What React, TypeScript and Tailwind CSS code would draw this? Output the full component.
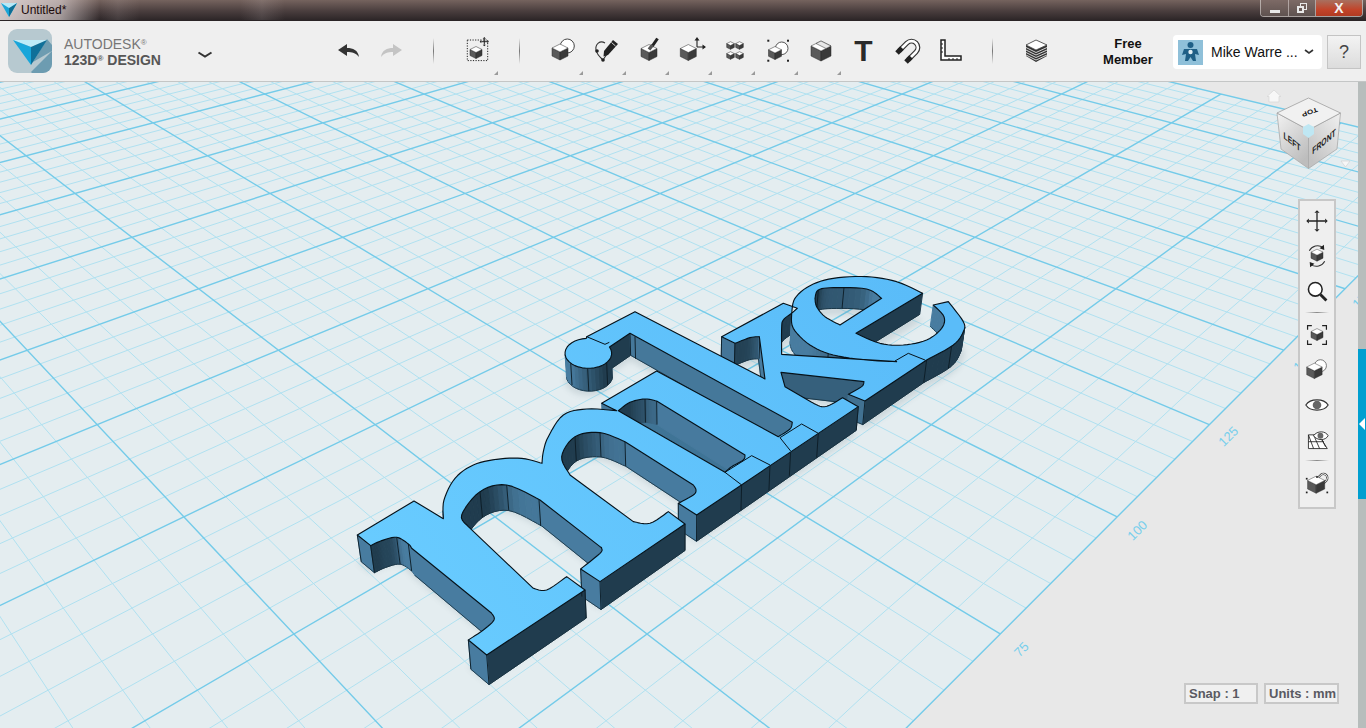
type Pt = [number, number];

// ---- ground grid: homography measured off the viewport
const project = (u: number, v: number): Pt => {
  const w = 0.002252 - 0.0001373 * (u + v);
  return [(0.0866 * u - 0.2723 * v + 0.2371) / w, 1 / w - 350];
};

const U_MIN = -3;
const U_MAX = 9;
const V_MIN = -7;
const V_MAX = 5;

function gridLines() {
  const minor: string[] = [];
  const major: string[] = [];
  for (let i = 0; i <= (U_MAX - U_MIN) * 5; i++) {
    const u = U_MIN + i / 5;
    const [a, b] = [project(u, V_MIN), project(u, V_MAX)];
    (i % 5 === 0 ? major : minor).push(`M${a[0]} ${a[1]}L${b[0]} ${b[1]}`);
  }
  for (let i = 0; i <= (V_MAX - V_MIN) * 5; i++) {
    const v = V_MIN + i / 5;
    const [a, b] = [project(U_MIN, v), project(U_MAX, v)];
    (i % 5 === 0 ? major : minor).push(`M${a[0]} ${a[1]}L${b[0]} ${b[1]}`);
  }
  return { minor: minor.join(""), major: major.join("") };
}

// ---- the extruded "mike" model (coordinates are 3x page px, origin at 550,265)
const spline = (pts: Pt[]): Pt[] => {
  const out: Pt[] = [];
  for (let i = 0; i < pts.length - 1; i++) {
    const p0 = pts[Math.max(i - 1, 0)];
    const p1 = pts[i];
    const p2 = pts[i + 1];
    const p3 = pts[Math.min(i + 2, pts.length - 1)];
    for (let s = 0; s < 6; s++) {
      const t = s / 6;
      const f = (a: number, b: number, c: number, d: number) =>
        0.5 * (2 * b + (c - a) * t + (2 * a - 5 * b + 4 * c - d) * t * t + (3 * b - a - 3 * c + d) * t * t * t);
      out.push([f(p0[0], p1[0], p2[0], p3[0]), f(p0[1], p1[1], p2[1], p3[1])]);
    }
  }
  out.push(pts[pts.length - 1]);
  return out;
};

const dotArc: Pt[] = [];
for (let d = -25; d <= 265; d += 10) {
  dotArc.push([115 + 70 * Math.cos((d * Math.PI) / 180), 265 + 45 * Math.sin((d * Math.PI) / 180)]);
}

const outer: Pt[] = [
  [-578, 810],
  [-408, 708],
  ...spline([[-320, 761], [-318, 705], [-285, 640], [-230, 600], [-160, 583], [-85, 580], [-24, 595]]),
  ...spline([[-24, 595], [-20, 560], [-5, 515], [40, 450], [110, 432], [200, 437]]),
  [155, 415],
  [320, 318],
  ...spline([[685, 515], [720, 492], [727, 472]]),
  [240, 205],
  ...dotArc,
  [110, 215],
  [255, 140],
  [645, 342],
  ...spline([[628, 215], [600, 218], [555, 235]]),
  [515, 215],
  [700, 115],
  [742, 130],
  ...spline([[725, 145], [735, 100], [780, 62], [850, 40], [950, 35], [1040, 50], [1118, 85]]),
  ...spline([[918, 205], [990, 235], [1060, 240], [1130, 225], [1175, 190], [1182, 155], [1150, 120]]),
  ...spline([[1195, 110], [1240, 170], [1240, 200], [1210, 240], [1130, 285]]),
  [945, 408],
  ...spline([[895, 388], [935, 365], [942, 350]]),
  [693, 322],
  [705, 365],
  ...spline([[785, 412], [815, 425], [840, 420], [878, 398]]),
  [925, 425],
  [440, 750],
  ...spline([[385, 715], [430, 690], [438, 675], [430, 660]]),
  ...spline([[225, 530], [150, 503], [75, 515], [35, 575], [60, 630]]),
  ...spline([[250, 770], [300, 775], [355, 740]]),
  [405, 777],
  [150, 950],
  ...spline([[92, 912], [150, 865], [155, 850], [150, 845]]),
  ...spline([[-30, 705], [-130, 660], [-210, 680], [-265, 750], [-245, 785]]),
  ...spline([[-50, 970], [-10, 975], [50, 935]]),
  [105, 975],
  [-190, 1170],
  ...spline([[-245, 1125], [-200, 1095], [-168, 1065], [-175, 1045]]),
  ...spline([[-415, 850], [-425, 837], [-460, 817], [-505, 827], [-538, 842]]),
];

const holes: Pt[][] = [
  [...spline([[205, 437], [240, 412], [285, 402], [320, 408]]), ...spline([[585, 570], [580, 585], [545, 605], [525, 622]])],
  [...spline([[795, 100], [805, 75], [850, 68], [950, 72], [995, 100]]), ...spline([[870, 180], [825, 155], [800, 125], [795, 100]])],
  [...spline([[695, 268], [695, 190], [700, 165], [725, 145]]), ...spline([[725, 145], [730, 190], [780, 240], [850, 270], [950, 285], [1040, 290]])],
];

const drop = (p: Pt, k = 1): Pt => [p[0] + k * (400 - p[0]) * 0.012, p[1] + k * (63 + 0.024 * (p[1] - 85))];
const toPath = (pts: Pt[]) => "M" + pts.map((p) => `${p[0].toFixed(1)} ${p[1].toFixed(1)}`).join("L") + "Z";

function wallQuads() {
  const quads: { d: string; low: string | null; fill: string; y: number }[] = [];
  const add = (loop: Pt[], flip: number, outlined: boolean) => {
    loop.forEach((a, i) => {
      const b = loop[(i + 1) % loop.length];
      const dx = b[0] - a[0];
      const dy = b[1] - a[1];
      const len = Math.hypot(dx, dy) || 1;
      const nx = (flip * dy) / len;
      const ny = (-flip * dx) / len;
      if (ny <= 0.02) return;
      const t = Math.min(1, Math.max(0, (nx + 0.55) / 1.0));
      const mix = (from: number, to: number) => Math.round(from + (to - from) * t);
      const a2 = drop(a);
      const b2 = drop(b);
      quads.push({
        d: toPath([a, b, b2, a2]),
        low: outlined ? `M${a2[0]} ${a2[1]}L${b2[0]} ${b2[1]}` : null,
        fill: `rgb(${mix(72, 32)},${mix(124, 60)},${mix(160, 78)})`,
        y: (a[1] + b[1]) / 2,
      });
    });
  };
  add(outer, 1, true);
  // the i/m slot is narrower than the wall is tall, so its floor edge never shows
  holes.forEach((h, i) => add(h, -1, i !== 0));
  return quads.sort((p, q) => p.y - q.y);
}

const creases: Pt[] = [
  [-578, 810], [-538, 842], [-460, 817], [-425, 837],
  [-245, 1125], [-190, 1170], [105, 975], [92, 912], [150, 950], [405, 777],
  [-210, 680], [-130, 660], [-33, 705],
  [75, 515], [150, 503], [225, 530],
  [385, 715], [440, 750], [575, 660], [660, 600], [722, 558], [805, 505], [925, 425], [945, 408],
  [62, 292], [113, 310], [170, 292],
  [240, 205], [255, 215], [555, 235], [515, 215], [630, 215],
  [285, 402], [320, 408],
  [805, 75], [882, 68],
  [835, 262], [1130, 285], [1205, 243],
];

const seams = [
  "M525 622L605 572L660 600M525 622L575 660",
  "M690 518L755 477L805 505M690 518L722 558",
  "M110 215L165 238L178 232",
  "M1035 288L1075 265L1125 285",
];

function Model() {
  const quads = wallQuads();
  const top = toPath(outer) + holes.map(toPath).join("");
  return (
    <g transform="translate(550 265) scale(0.3333)">
      <path d={top} fillRule="evenodd" fill="#34505c" opacity="0.14" filter="url(#soft)" transform="translate(0 82)" />
      <path d={toPath(holes[0])} fill="#3f7496" />
      {quads.map((q, i) => (
        <g key={i}>
          <path d={q.d} fill={q.fill} stroke={q.fill} strokeWidth="3" />
          {q.low && <path d={q.low} stroke="#16303e" strokeWidth="2.4" />}
        </g>
      ))}
      {creases.map((p, i) => {
        const e = drop(p);
        return <line key={i} x1={p[0]} y1={p[1]} x2={e[0]} y2={e[1]} stroke="#0c1c26" strokeWidth="2.8" />;
      })}
      <path d={top} fillRule="evenodd" fill="url(#face)" stroke="#06121a" strokeWidth="3.4" strokeLinejoin="round" />
      <path d={seams.join("")} fill="none" stroke="#06121a" strokeWidth="3" />
    </g>
  );
}

function Viewport() {
  const { minor, major } = gridLines();
  const plate = [project(U_MIN, V_MIN), project(U_MAX, V_MIN), project(U_MAX, V_MAX), project(U_MIN, V_MAX)];
  const labels: [string, number, number][] = [
    ["75", 1021, 654],
    ["100", 1137, 535],
    ["125", 1228, 441],
    ["150", 1303, 366],
    ["175", 1362, 303],
  ];
  return (
    <svg className="absolute inset-0 h-full w-full" viewBox="0 82 1358 646">
      <defs>
        <linearGradient id="face" gradientUnits="userSpaceOnUse" x1="-500" y1="1100" x2="1100" y2="100">
          <stop offset="0" stopColor="#69ccff" />
          <stop offset="1" stopColor="#5abcf9" />
        </linearGradient>
        <filter id="soft" x="-10%" y="-10%" width="120%" height="120%">
          <feGaussianBlur stdDeviation="9" />
        </filter>
      </defs>
      <path d={toPath(plate)} fill="#e4edf0" />
      <path d={minor} stroke="#b0e1f0" strokeWidth="1" fill="none" />
      <path d={major} stroke="#74cbe9" strokeWidth="1.4" fill="none" />
      {labels.map(([t, x, y]) => (
        <text key={t} x={x} y={y} textAnchor="middle" fontSize="13" fill="#78cfec" transform={`rotate(-45 ${x} ${y - 5})`} fontFamily="Liberation Sans, sans-serif">
          {t}
        </text>
      ))}
      <Model />
    </svg>
  );
}

// ---- toolbar glyphs
function Cube({ x, y, s, top = "#fff" }: { x: number; y: number; s: number; top?: string }) {
  const h = s / 2;
  return (
    <g stroke="#2b2b2b" strokeWidth="0.5" strokeLinejoin="round">
      <path d={`M${x - s} ${y - h}L${x} ${y}V${y + s}L${x - s} ${y + h}Z`} fill="#5a5a5a" />
      <path d={`M${x + s} ${y - h}L${x} ${y}V${y + s}L${x + s} ${y + h}Z`} fill="#3a3a3a" />
      <path d={`M${x} ${y - s}L${x + s} ${y - h}L${x} ${y}L${x - s} ${y - h}Z`} fill={top} />
    </g>
  );
}

function Cross({ x, y, r, w = 1, a = 2 }: { x: number; y: number; r: number; w?: number; a?: number }) {
  return (
    <g fill="#222">
      <path d={`M${x - r} ${y}H${x + r}M${x} ${y - r}V${y + r}`} stroke="#222" strokeWidth={w} />
      <path
        d={`M${x - r - a} ${y}l${a} -${a}v${2 * a}ZM${x + r + a} ${y}l-${a} -${a}v${2 * a}ZM${x} ${y - r - a}l-${a} ${a}h${2 * a}ZM${x} ${y + r + a}l-${a} -${a}h${2 * a}Z`}
      />
    </g>
  );
}

function Handles({ pts }: { pts: Pt[] }) {
  return (
    <g fill="#222">
      {pts.map(([x, y], i) => (
        <rect key={i} x={x - 1} y={y - 1} width="2" height="2" />
      ))}
    </g>
  );
}

const toolGlyphs = [
  <>
    <circle cx="18.3" cy="9" r="7" fill="#fff" stroke="#444" strokeWidth="1" />
    <Cube x={11} y={15} s={8} />
  </>,
  <>
    <path d="M13 6C8 3 3 7 4 13C5 18 9 21 11 23L15 17" fill="none" stroke="#333" strokeWidth="1.1" />
    <circle cx="5" cy="14" r="1.8" fill="#222" />
    <circle cx="11" cy="23" r="1.8" fill="#222" />
    <path d="M21 3L26 7L16 18L11.5 19.5L12 14Z" fill="#222" />
    <path d="M19.5 5.5L23.5 9" stroke="#fff" strokeWidth="0.8" />
  </>,
  <>
    <Cube x={14} y={15.5} s={8} />
    <path d="M22.5 1.5L17 9.5" stroke="#222" strokeWidth="3" />
    <path d="M17.5 8L14 12.5" stroke="#555" strokeWidth="3.4" />
  </>,
  <>
    <Cube x={10.3} y={15.5} s={8} />
    <path d="M19 10V2M19 10H27" stroke="#222" strokeWidth="1.1" />
    <path d="M19 0L16.5 3.5H21.5ZM28 10L24.5 7.5V12.5Z" fill="#222" />
  </>,
  <>
    <Cube x={9.5} y={8.5} s={3.8} />
    <Cube x={18.5} y={8.5} s={3.8} />
    <Cube x={9.5} y={18.5} s={3.8} />
    <Cube x={18.5} y={18.5} s={3.8} />
  </>,
  <>
    <circle cx="17.7" cy="11.3" r="6.3" fill="#fff" stroke="#555" strokeWidth="1" />
    <Cube x={11} y={16} s={6.5} />
    <Handles pts={[[4.3, 3.7], [24, 3.7], [4.3, 23.7], [24, 23.7]]} />
  </>,
  <>
    <Cube x={14} y={14} s={10} />
    <path d="M14 4L24 9L19 11.5L9 6.5Z" fill="#e8e8e8" stroke="#2b2b2b" strokeWidth="0.5" />
  </>,
];

function Glyph({ children, size = 28 }: { children: React.ReactNode; size?: number }) {
  return (
    <svg width={size} height={size} viewBox="0 0 28 28" className="overflow-visible">
      {children}
    </svg>
  );
}

function ToolCell({ children, flyout }: { children: React.ReactNode; flyout?: boolean }) {
  return (
    <div className="relative flex h-[60px] w-[43px] shrink-0 items-center justify-center">
      {children}
      {flyout && (
        <svg className="absolute bottom-[6px] right-[1px]" width="4" height="4" viewBox="0 0 4 4">
          <path d="M4 0V4H0Z" fill="#9a9a9a" />
        </svg>
      )}
    </div>
  );
}

function Sep() {
  return <div className="h-[26px] w-px shrink-0 bg-[linear-gradient(180deg,#efefef,#777_50%,#efefef)]" />;
}

function TitleBar() {
  return (
    <div className="relative flex h-[21px] shrink-0 items-start border-b border-b-[#2a2426] bg-[linear-gradient(180deg,#75635e_0%,#4a3e3e_55%,#2d2628_100%)]">
      <div className="absolute inset-0 bg-[linear-gradient(90deg,rgba(235,225,225,0.85)_0px,rgba(235,225,225,0.6)_60px,rgba(235,225,225,0)_100px,rgba(235,225,225,0.1)_118px,rgba(235,225,225,0)_140px,rgba(235,225,225,0)_240px,rgba(235,225,225,0.12)_262px,rgba(235,225,225,0)_285px)]" />
      <svg className="relative ml-[1px] mt-[3px]" width="16" height="14" viewBox="0 0 16 14">
        <path d="M0 0H16L8 14Z" fill="#1aa5d8" />
        <path d="M8 5L16 0L8 14Z" fill="#0f6e94" />
        <path d="M0 0H16L8 5Z" fill="#b8e8f6" />
      </svg>
      <span className="relative ml-[4px] mt-[3px] text-[12px] leading-[15px] text-[#1c0a0a]">Untitled*</span>
      <div className="absolute right-[3px] top-0 flex h-[17px] w-[103px] overflow-hidden rounded-b-[4px] border border-t-0 border-[#d8d0ce]/70">
        <div className="flex w-[28px] items-center justify-center border-r border-[#d8d0ce]/60 bg-[linear-gradient(180deg,#7d6a66,#5f5250)]">
          <div className="mt-[6px] h-[3px] w-[10px] bg-[#e8e8e8]" />
        </div>
        <div className="flex w-[27px] items-center justify-center border-r border-[#d8d0ce]/60 bg-[linear-gradient(180deg,#7d6a66,#5f5250)]">
          <div className="relative h-[10px] w-[10px]">
            <div className="absolute right-0 top-0 h-[7px] w-[7px] border border-[#e8e8e8]" />
            <div className="absolute bottom-0 left-0 h-[7px] w-[7px] border-2 border-[#e8e8e8] bg-[#6a5a57]" />
          </div>
        </div>
        <div className="flex flex-1 items-center justify-center bg-[linear-gradient(180deg,#a8705f,#c2442a_60%,#b23a22)] text-[14px] font-bold leading-none text-[#f2f2f2]">
          X
        </div>
      </div>
    </div>
  );
}

function Header() {
  return (
    <div className="flex h-[61px] shrink-0 items-center border-b border-b-[#c4c6c6] bg-[#efefef]">
      <svg className="ml-[8px] shrink-0" width="44" height="44" viewBox="0 0 44 44">
        <rect width="44" height="44" rx="9" fill="#b7c9d0" />
        <path d="M23 43L44 22V35A9 9 0 0 1 35 44H24Z" fill="#6d9cb1" />
        <path d="M39 10L25 33L44 22V16Z" fill="#6d9cb1" />
        <path d="M5 11H39L23 18Z" fill="#bdebf8" />
        <path d="M5 11L23 18V36Z" fill="#18a6da" />
        <path d="M39 11L23 18V36Z" fill="#0f7099" />
      </svg>
      <div className="ml-[12px] mt-[2px] flex w-[130px] shrink-0 flex-col text-[14px] leading-[16px] text-[#767676]">
        <span>
          AUTODESK<sup className="text-[8px] leading-none">®</sup>
        </span>
        <span className="font-bold text-[#565656]">
          123D<sup className="text-[8px] leading-none">®</sup> DESIGN
        </span>
      </div>
      <svg className="ml-[3px] mt-[8px] shrink-0" width="16" height="8" viewBox="0 0 16 8">
        <path d="M1.5 1.5L8 5.5L14.5 1.5" fill="none" stroke="#333" strokeWidth="2" />
      </svg>
      <div className="ml-[115px] flex w-[42px] shrink-0 justify-center">
        <svg width="22" height="16" viewBox="0 0 22 16">
          <path d="M0 7L9 1V5C15 5 20 7 21 14C18 10 14 9 9 9V13Z" fill="#333" />
        </svg>
      </div>
      <div className="flex w-[42px] shrink-0 justify-center">
        <svg width="22" height="16" viewBox="0 0 22 16">
          <path d="M22 7L13 1V5C7 5 2 7 1 14C4 10 8 9 13 9V13Z" fill="#c4c4c4" />
        </svg>
      </div>
      <div className="ml-[21px] flex">
        <Sep />
      </div>
      <div className="ml-[22px]">
        <ToolCell flyout>
          <Glyph>
            <rect x="3.3" y="3" width="20.4" height="20.6" fill="none" stroke="#222" strokeWidth="1" strokeDasharray="1.2 1.4" />
            <Cube x={12} y={15.5} s={6} />
            <Cross x={20.3} y={4.7} r={3} w={1} a={1.6} />
          </Glyph>
        </ToolCell>
      </div>
      <div className="ml-[20px]">
        <Sep />
      </div>
      <div className="ml-[21px] flex">
        {toolGlyphs.map((g, i) => (
          <ToolCell key={i} flyout>
            <Glyph>{g}</Glyph>
          </ToolCell>
        ))}
        <ToolCell>
          <span className="text-[30px] font-bold leading-none text-[#2a2a2a]">T</span>
        </ToolCell>
        <ToolCell>
          <Glyph>
            <path d="M6 14L14 6A6.2 6.2 0 0 1 23 15L15 23" fill="none" stroke="#333" strokeWidth="5" />
            <path d="M6 14L14 6A6.2 6.2 0 0 1 23 15L15 23" fill="none" stroke="#fff" strokeWidth="2.6" />
            <path d="M4 16L9 11M13 25L18 20" stroke="#222" strokeWidth="5" />
          </Glyph>
        </ToolCell>
        <ToolCell>
          <Glyph>
            <path d="M5 3H9V19H25V23H5Z" fill="#fff" stroke="#222" strokeWidth="1.5" />
            <path d="M5 7H7M5 11H7M5 15H7M13 23V21M17 23V21M21 23V21" stroke="#222" strokeWidth="1" />
          </Glyph>
        </ToolCell>
      </div>
      <div className="ml-[21px]">
        <Sep />
      </div>
      <div className="ml-[21px]">
        <ToolCell>
          <Glyph>
            <path d="M4 8L14 13L25 8V19L14 25L4 19Z" fill="#333" />
            <path d="M4 10.5L14 15.5L25 10.5M4 13L14 18L25 13M4 15.5L14 20.5L25 15.5M4 18L14 23L25 18" fill="none" stroke="#fff" strokeWidth="0.8" />
            <path d="M14 3L25 8L14 13L4 8Z" fill="#fff" stroke="#333" strokeWidth="0.8" />
          </Glyph>
        </ToolCell>
      </div>
      <div className="ml-[31px] mt-[1px] w-[80px] shrink-0 text-center text-[13px] font-bold leading-[16px] text-[#111]">
        Free
        <br />
        Member
      </div>
      <div className="ml-[5px] mt-[2px] flex h-[34px] w-[149px] shrink-0 items-center rounded-[4px] bg-white pl-[5px]">
        <svg className="shrink-0" width="25" height="25" viewBox="0 0 25 25">
          <rect width="25" height="25" fill="#8fc0d9" />
          <circle cx="12.5" cy="5" r="3" fill="#1f5f86" />
          <path d="M6 9H19L21 15L17 14L18 21H15L12.5 17L10 21H7L8 14L4 15Z" fill="#1f5f86" />
          <circle cx="12.5" cy="12" r="2.2" fill="#dfeef5" />
        </svg>
        <span className="ml-[8px] whitespace-nowrap text-[14px] text-[#111]">Mike Warre ...</span>
        <svg className="ml-[6px] shrink-0" width="10" height="6" viewBox="0 0 10 6">
          <path d="M1 1L5 4L9 1" fill="none" stroke="#333" strokeWidth="1.6" />
        </svg>
      </div>
      <div className="ml-[5px] mt-[2px] flex h-[34px] w-[34px] shrink-0 items-center justify-center border border-[#c4c4c4] bg-[linear-gradient(180deg,#f3f3f3,#dcdcdc)] text-[18px] text-[#444]">
        ?
      </div>
    </div>
  );
}

function ViewCube() {
  return (
    <svg className="absolute right-[2px] top-[5px]" width="90" height="94" viewBox="1266 87 90 94">
      <defs>
        <linearGradient id="cubeLeft" x1="0" y1="0" x2="0.6" y2="1">
          <stop offset="0" stopColor="#f2f2f2" />
          <stop offset="1" stopColor="#bdbdbd" />
        </linearGradient>
        <linearGradient id="cubeRight" x1="1" y1="0" x2="0.3" y2="1">
          <stop offset="0" stopColor="#f0f0f0" />
          <stop offset="1" stopColor="#c2c2c2" />
        </linearGradient>
      </defs>
      <path d="M1277 113L1308.5 130V168.5L1281 149Z" fill="url(#cubeLeft)" stroke="#a9a9a9" strokeWidth="0.8" />
      <path d="M1340.5 113L1308.5 130V168.5L1337 149Z" fill="url(#cubeRight)" stroke="#a9a9a9" strokeWidth="0.8" />
      <path d="M1308.5 98L1340.5 113L1308.5 130L1277 113Z" fill="#f1f1f1" stroke="#9f9f9f" strokeWidth="0.8" />
      <path d="M1308.5 124L1314 127V134L1308.5 138L1303 134V127Z" fill="#bfe7f3" />
      <text x="0" y="0" fontSize="8" fontWeight="700" fill="#111" textAnchor="middle" transform="translate(1309 110) rotate(160) scale(1 0.8)" fontFamily="Liberation Sans, sans-serif">
        TOP
      </text>
      <text x="0" y="0" fontSize="8.5" fontWeight="700" fill="#222" textAnchor="middle" transform="translate(1292 145) skewY(38) scale(0.8 1.15)" fontFamily="Liberation Sans, sans-serif">
        LEFT
      </text>
      <text x="0" y="0" fontSize="8.5" fontWeight="700" fill="#222" textAnchor="middle" transform="translate(1324 145) skewY(-40) scale(0.8 1.15)" fontFamily="Liberation Sans, sans-serif">
        FRONT
      </text>
      <path d="M1274 90L1281 96.5H1279V102H1269V96.5H1267Z" fill="#f7f7f7" stroke="#d6d6d6" strokeWidth="0.7" />
      <path d="M1341 161H1350L1345.5 167Z" fill="#f7f7f7" stroke="#cfcfcf" strokeWidth="0.6" />
    </svg>
  );
}

function SideTools() {
  const Rule = () => <div className="mx-auto h-px w-[24px] bg-[linear-gradient(90deg,#efefef,#888,#efefef)]" />;
  const cell = "flex h-[35px] items-center justify-center";
  return (
    <div className="absolute right-[22px] top-[117px] flex h-[310px] w-[38px] flex-col border-2 border-[#c8c8c8] bg-[#efefef] pt-[2px]">
      <div className={cell}>
        <Glyph size={24}>
          <Cross x={14} y={14} r={9.5} w={1.5} a={3} />
        </Glyph>
      </div>
      <div className={cell}>
        <Glyph size={24}>
          <Cube x={14} y={13} s={7} />
          <path d="M5 8A11 11 0 0 1 21 4M23 20A11 11 0 0 1 7 24" fill="none" stroke="#333" strokeWidth="1.2" />
          <path d="M22 1L22.5 7L17 5ZM6 27L5.5 21L11 23Z" fill="#222" />
        </Glyph>
      </div>
      <div className={cell}>
        <Glyph size={24}>
          <circle cx="12" cy="12" r="8" fill="#fff" stroke="#222" strokeWidth="1.8" />
          <path d="M18 18L25 25" stroke="#222" strokeWidth="3.4" />
        </Glyph>
      </div>
      <div className="h-[3.5px]" />
      <Rule />
      <div className="h-[4.5px]" />
      <div className={cell}>
        <Glyph size={24}>
          <path d="M3 8V3H8M20 3H25V8M25 20V25H20M8 25H3V20" fill="none" stroke="#222" strokeWidth="1.4" />
          <Cube x={14} y={13.5} s={7} />
        </Glyph>
      </div>
      <div className={cell}>
        <Glyph size={24}>
          <circle cx="18" cy="9" r="7" fill="#fff" stroke="#666" strokeWidth="1" />
          <Cube x={11} y={15} s={9} />
        </Glyph>
      </div>
      <div className={cell}>
        <Glyph size={24}>
          <path d="M1 14C6 6 22 6 27 14C22 22 6 22 1 14Z" fill="#fff" stroke="#333" strokeWidth="1.4" />
          <circle cx="14" cy="14" r="5" fill="#666" />
        </Glyph>
      </div>
      <div className={cell}>
        <Glyph size={24}>
          <path d="M4 8H16L26 24H4Z" fill="#fff" stroke="#222" strokeWidth="1" />
          <path d="M4 16H22M4 8L10 24M10 8L17 24M17 8L24 22" stroke="#222" strokeWidth="1" />
          <path d="M10 9C14 3 24 3 27 9C24 15 14 15 10 9Z" fill="#fff" stroke="#333" strokeWidth="1.1" />
          <circle cx="18" cy="9" r="3.4" fill="#666" />
        </Glyph>
      </div>
      <div className="h-[3px]" />
      <Rule />
      <div className="h-[4.5px]" />
      <div className={cell}>
        <Glyph size={24}>
          <path d="M13 10L18 5A4.5 4.5 0 0 1 25 11L20 16" fill="none" stroke="#444" strokeWidth="2.6" />
          <path d="M13 10L18 5A4.5 4.5 0 0 1 25 11L20 16" fill="none" stroke="#fff" strokeWidth="1.1" />
          <Cube x={13} y={16} s={10} />
          <Handles pts={[[2, 9], [26, 25], [2, 25], [14, 7]]} />
        </Glyph>
      </div>
    </div>
  );
}

function StatusBoxes() {
  const box = "flex h-[21px] items-center whitespace-nowrap border-2 border-[#c8c8c8] bg-[#f0f0f0] pl-[3px] text-[13px] font-bold text-[#5a5a62]";
  return (
    <div className="absolute bottom-[24px] right-[19px] flex gap-[6px]">
      <div className={box + " w-[74px]"}>Snap : 1</div>
      <div className={box + " w-[75px]"}>Units : mm</div>
    </div>
  );
}

export default function App() {
  return (
    <div className="flex h-[728px] w-[1366px] flex-col overflow-hidden bg-[#e8e8e8] font-['Liberation_Sans',Arial,sans-serif]">
      <TitleBar />
      <Header />
      <div className="flex min-h-0 flex-1">
        <div className="relative flex-1 overflow-hidden">
          <Viewport />
          <ViewCube />
          <SideTools />
          <StatusBoxes />
        </div>
        <div className="flex w-[8px] shrink-0 flex-col bg-[#b7bdbc]">
          <div className="mt-[267px] flex h-[150px] items-center justify-center bg-[#009fd0]">
            <svg width="6" height="12" viewBox="0 0 6 12">
              <path d="M6 0V12L0 6Z" fill="#fff" />
            </svg>
          </div>
        </div>
      </div>
    </div>
  );
}
